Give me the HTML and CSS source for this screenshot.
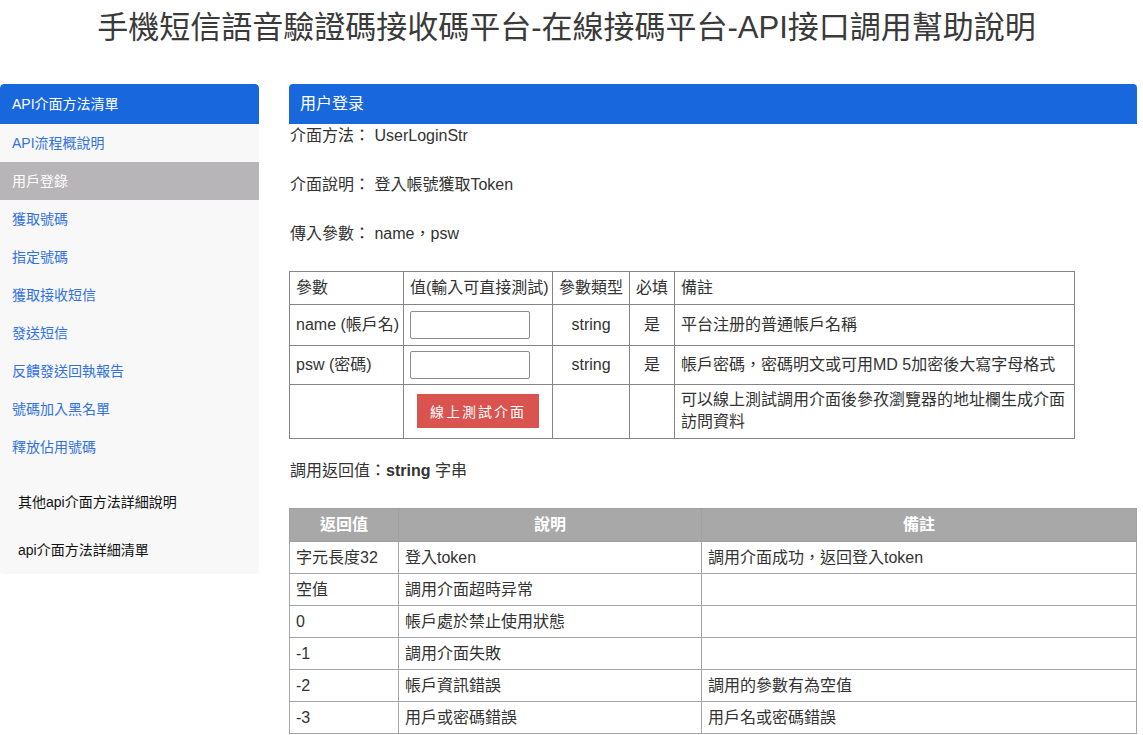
FILE: index.html
```html
<!DOCTYPE html>
<html lang="zh-Hant">
<head>
<meta charset="utf-8">
<title>API接口調用幫助說明</title>
<link rel="stylesheet" href="styles.css">
</head>
<body>
<h1 class="page-title">手機短信語音驗證碼接收碼平台-在線接碼平台-API接口調用幫助說明</h1>
<div class="layout">
  <aside class="sidebar">
    <div class="side-head">API介面方法清單</div>
    <ul class="side-list">
      <li class="side-item">API流程概說明</li>
      <li class="side-item active">用戶登錄</li>
      <li class="side-item">獲取號碼</li>
      <li class="side-item">指定號碼</li>
      <li class="side-item">獲取接收短信</li>
      <li class="side-item">發送短信</li>
      <li class="side-item">反饋發送回執報告</li>
      <li class="side-item">號碼加入黑名單</li>
      <li class="side-item">釋放佔用號碼</li>
    </ul>
    <ul class="side-extra">
      <li class="extra-item">其他api介面方法詳細說明</li>
      <li class="extra-item">api介面方法詳細清單</li>
    </ul>
  </aside>
  <main class="main">
    <div class="main-head">用户登录</div>
    <p class="info"><span class="label">介面方法：</span> UserLoginStr</p>
    <p class="info"><span class="label">介面說明：</span> 登入帳號獲取Token</p>
    <p class="info"><span class="label">傳入參數：</span> name，psw</p>
    <table class="params">
      <colgroup>
        <col class="c1"><col class="c2"><col class="c3"><col class="c4"><col class="c5">
      </colgroup>
      <tr><td class="nw">參數</td><td class="nw">值(輸入可直接測試)</td><td class="nw">參數類型</td><td class="nw">必填</td><td>備註</td></tr>
      <tr class="r1"><td class="nw">name (帳戶名)</td><td><input class="field" type="text"></td><td class="center">string</td><td class="center">是</td><td>平台注册的普通帳戶名稱</td></tr>
      <tr class="r2"><td class="nw">psw (密碼)</td><td><input class="field" type="text"></td><td class="center">string</td><td class="center">是</td><td>帳戶密碼，密碼明文或可用MD 5加密後大寫字母格式</td></tr>
      <tr class="r3"><td></td><td class="btn-cell"><button class="btn" type="button">線上測試介面</button></td><td></td><td></td><td>可以線上測試調用介面後參孜瀏覽器的地址欄生成介面訪問資料</td></tr>
    </table>
    <p class="ret">調用返回值：<b>string</b> 字串</p>
    <table class="returns">
      <colgroup><col class="d1"><col class="d2"><col class="d3"></colgroup>
      <tr><th>返回值</th><th>說明</th><th>備註</th></tr>
      <tr><td>字元長度32</td><td>登入token</td><td>調用介面成功，返回登入token</td></tr>
      <tr><td>空值</td><td>調用介面超時异常</td><td></td></tr>
      <tr><td>0</td><td>帳戶處於禁止使用狀態</td><td></td></tr>
      <tr><td>-1</td><td>調用介面失敗</td><td></td></tr>
      <tr><td>-2</td><td>帳戶資訊錯誤</td><td>調用的參數有為空值</td></tr>
      <tr><td>-3</td><td>用戶或密碼錯誤</td><td>用戶名或密碼錯誤</td></tr>
    </table>
  </main>
</div>
</body>
</html>
```
FILE: styles.css
```css
html, body {
  margin: 0;
  padding: 0;
  background: #fff;
}
body {
  font-family: "Liberation Sans", Arial, "Noto Sans CJK TC", sans-serif;
  font-size: 16px;
  color: #333;
}
.page-title {
  margin: 0 0 38px;
  padding: 10px 10px 0 0;
  height: 36px;
  line-height: 36px;
  font-size: 31px;
  font-weight: normal;
  text-align: center;
  color: #3a3a3a;
  white-space: nowrap;
}
.layout {
  display: flex;
  align-items: flex-start;
  gap: 30px;
  padding-right: 6px;
}
.sidebar {
  width: 259px;
  flex: none;
  background: #f8f8f8;
  border-radius: 4px;
  overflow: hidden;
}
.side-head {
  height: 40px;
  line-height: 40px;
  padding-left: 12px;
  background: #1967dc;
  color: #fff;
  font-size: 14px;
  border-radius: 4px 4px 0 0;
}
.side-list, .side-extra {
  list-style: none;
  margin: 0;
  padding: 0;
}
.side-item {
  height: 38px;
  line-height: 38px;
  padding-left: 12px;
  font-size: 14px;
  color: #3271de;
}
.side-item.active {
  background: #b7b5b7;
  color: #fff;
}
.side-extra {
  padding-top: 12px;
}
.extra-item {
  height: 48px;
  line-height: 48px;
  padding-left: 18px;
  font-size: 14px;
  color: #111;
}
.main {
  flex: 1;
  min-width: 0;
}
.main-head {
  height: 40px;
  line-height: 40px;
  padding-left: 11px;
  background: #1967dc;
  color: #fff;
  font-size: 16px;
  border-radius: 4px 4px 0 0;
}
.info {
  margin: 0 0 25px;
  line-height: 24px;
  padding-left: 1px;
}
.params {
  border-collapse: collapse;
  table-layout: fixed;
  width: 786px;
  margin-bottom: 21px;
}
.params td {
  border: 1px solid #858585;
  padding: 5px 6px;
  line-height: 22px;
  vertical-align: middle;
  text-align: left;
}
.params .nw { white-space: nowrap; }
.params .c1 { width: 114px; }
.params .c2 { width: 149px; }
.params .c3 { width: 77px; }
.params .c4 { width: 45px; }
.params .r1 td { height: 30px; }
.params .r2 td { height: 28px; }
.params .r3 td { padding-top: 4px; }
.params .center { text-align: center; }
.field {
  display: block;
  box-sizing: border-box;
  width: 120px;
  height: 28px;
  margin: 0;
  border: 1px solid #8c8c8c;
  border-radius: 2px;
  background: #fff;
}
.params .btn-cell { text-align: center; }
.btn {
  display: inline-block;
  width: 122px;
  height: 34px;
  border: none;
  border-radius: 0;
  background: #d9534f;
  color: #fff;
  font-family: "Liberation Sans", Arial, "Noto Sans CJK TC", sans-serif;
  font-size: 14px;
  letter-spacing: 2px;
  cursor: pointer;
}
.ret {
  margin: 0 0 26px;
  line-height: 22px;
  padding-left: 1px;
}
.ret b { font-weight: bold; }
.returns {
  border-collapse: collapse;
  width: 848px;
}
.returns .d1 { width: 109px; }
.returns .d2 { width: 303px; }
.returns th {
  background: #a8a8a8;
  color: #fff;
  font-weight: bold;
  text-align: center;
  border: 1px solid #a0a0a0;
  padding: 5px 6px;
  line-height: 22px;
}
.returns td {
  border: 1px solid #a6a6a6;
  padding: 5px 6px 4px;
  line-height: 22px;
  height: 22px;
  text-align: left;
}
```
